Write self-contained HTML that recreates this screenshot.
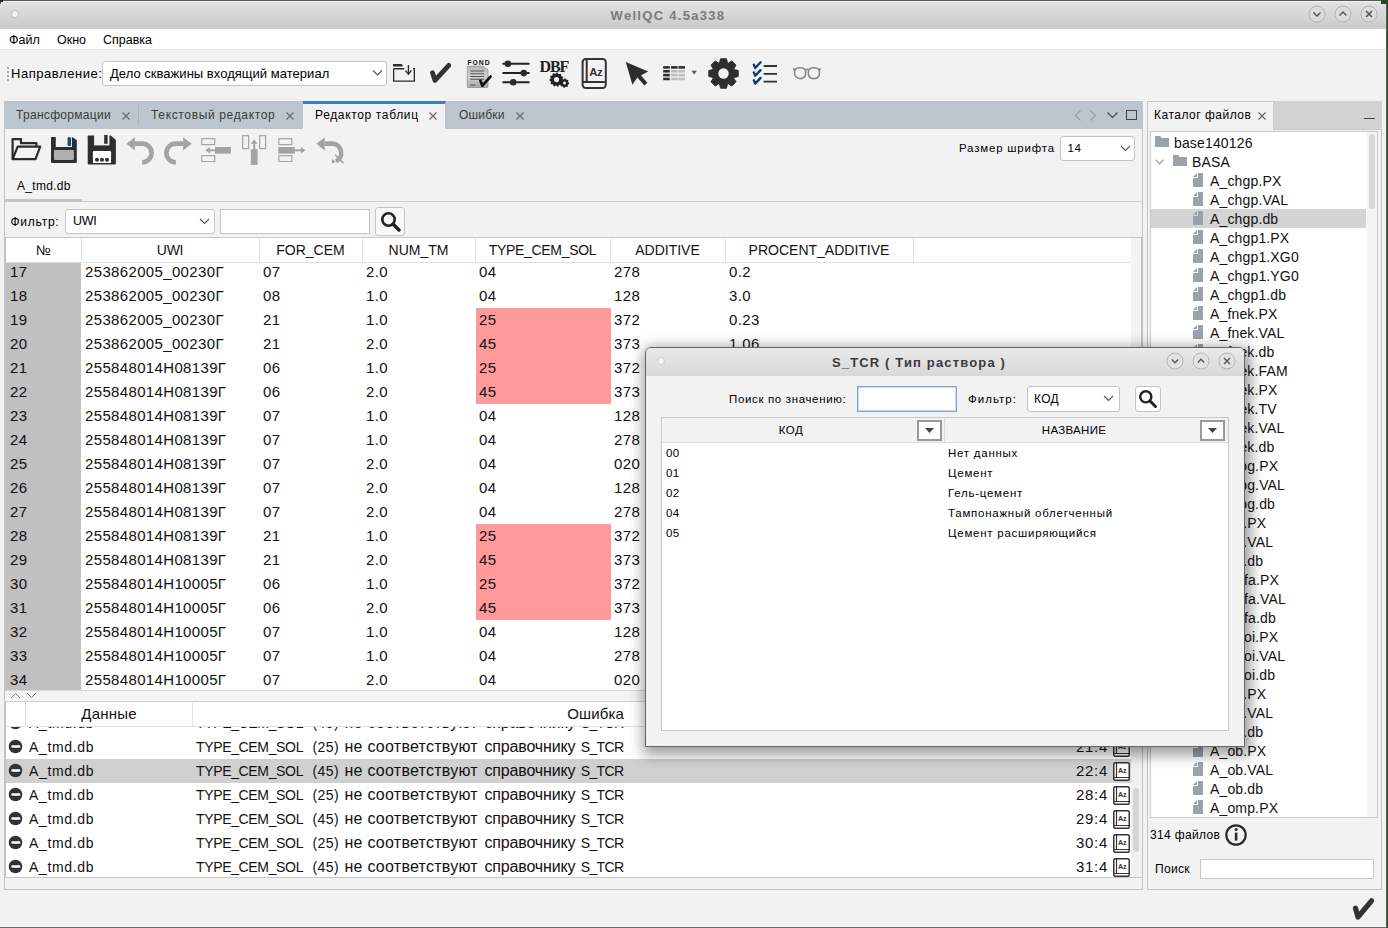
<!DOCTYPE html><html><head><meta charset="utf-8"><style>
html,body{margin:0;padding:0;}body{width:1388px;height:928px;overflow:hidden;position:relative;background:#f2f2f2;font-family:"Liberation Sans",sans-serif;}
div{box-sizing:border-box;}
</style></head><body>
<div style="position:absolute;left:0px;top:0px;width:1388px;height:29px;background:linear-gradient(#e4e4e4,#c9c9c9);"></div>
<div style="position:absolute;left:0px;top:0px;width:1388px;height:1px;background:#5a5a5a;"></div>
<div style="position:absolute;left:0px;top:1px;width:1388px;height:1px;background:#f4f4f4;"></div>
<div style="position:absolute;left:11px;top:10px;width:8px;height:8px;border-radius:50%;background:#f4f4f4;border:1px solid #bdbdbd;"></div>
<div style="position:absolute;left:368px;width:600px;text-align:center;top:7.50px;line-height:16px;font-size:13px;color:#7b7b7b;font-weight:700;letter-spacing:1.3px;white-space:pre;">WellQC 4.5a338</div>
<svg style="position:absolute;left:1308px;top:5px" width="18" height="18" viewBox="0 0 18 18"><circle cx="9" cy="9" r="8" fill="#dcdcdc" stroke="#b4b4b4" stroke-width="1"/><path d="M5.5 7.5 L9 11 L12.5 7.5" fill="none" stroke="#555" stroke-width="1.5"/></svg>
<svg style="position:absolute;left:1334px;top:5px" width="18" height="18" viewBox="0 0 18 18"><circle cx="9" cy="9" r="8" fill="#dcdcdc" stroke="#b4b4b4" stroke-width="1"/><path d="M5.5 10.5 L9 7 L12.5 10.5" fill="none" stroke="#555" stroke-width="1.5"/></svg>
<svg style="position:absolute;left:1360px;top:5px" width="18" height="18" viewBox="0 0 18 18"><circle cx="9" cy="9" r="8" fill="#dcdcdc" stroke="#b4b4b4" stroke-width="1"/><path d="M6 6 L12 12 M12 6 L6 12" fill="none" stroke="#555" stroke-width="1.5"/></svg>
<div style="position:absolute;left:0px;top:29px;width:1388px;height:20px;background:#ffffff;"></div>
<div style="position:absolute;left:0px;top:49px;width:1388px;height:1px;background:#e6e6e6;"></div>
<div style="position:absolute;left:9px;top:32.67px;line-height:15px;font-size:12.5px;color:#000;font-weight:400;letter-spacing:0px;white-space:pre;">Файл</div>
<div style="position:absolute;left:57px;top:32.67px;line-height:15px;font-size:12.5px;color:#000;font-weight:400;letter-spacing:0px;white-space:pre;">Окно</div>
<div style="position:absolute;left:103px;top:32.67px;line-height:15px;font-size:12.5px;color:#000;font-weight:400;letter-spacing:0px;white-space:pre;">Справка</div>
<div style="position:absolute;left:7px;top:66.5px;width:2px;height:2px;background:#a8a8a8;"></div>
<div style="position:absolute;left:7px;top:70.5px;width:2px;height:2px;background:#a8a8a8;"></div>
<div style="position:absolute;left:7px;top:74.5px;width:2px;height:2px;background:#a8a8a8;"></div>
<div style="position:absolute;left:7px;top:78.5px;width:2px;height:2px;background:#a8a8a8;"></div>
<div style="position:absolute;left:11px;top:66.00px;line-height:16px;font-size:13px;color:#000;font-weight:400;letter-spacing:0.55px;white-space:pre;">Направление:</div>
<div style="position:absolute;left:102px;top:61px;width:285px;height:25px;background:#fff;border:1px solid #c4c4c4;border-radius:3px;"></div>
<div style="position:absolute;left:110px;top:66.00px;line-height:16px;font-size:13px;color:#000;font-weight:400;letter-spacing:0.03px;white-space:pre;">Дело скважины входящий материал</div>
<svg style="position:absolute;left:372px;top:69px" width="11" height="8" viewBox="0 0 11 8"><path d="M1 1.5 L5.5 6 L10 1.5" fill="none" stroke="#555" stroke-width="1.1"/></svg>
<svg style="position:absolute;left:392px;top:62px" width="25" height="22" viewBox="0 0 25 22"><path d="M1 2 H9.6 L10.6 3.2 V4.6 H1 Z" fill="#2b2b2b"/><path d="M1.65 6.75 V19.05 H22.35 V6.75 H21 M1.65 6.75 H12.3" fill="none" stroke="#2b2b2b" stroke-width="1.3"/><path d="M16.4 3 V12" stroke="#2b2b2b" stroke-width="1.3"/><path d="M13.5 8.5 L16.4 12.3 L19.3 8.5" fill="none" stroke="#2b2b2b" stroke-width="1.3"/></svg>
<svg style="position:absolute;left:429px;top:61px" width="24" height="24" viewBox="0 0 24 24"><path d="M3.5 11.8 L6 19.4 L19.8 4.3" fill="none" stroke="#333" stroke-width="4.8" stroke-linecap="round" stroke-linejoin="round"/></svg>
<svg style="position:absolute;left:466px;top:59px" width="27" height="29" viewBox="0 0 27 29"><text x="1.4" y="5.9" font-family="Liberation Sans" font-weight="700" font-size="6.8" fill="#111" letter-spacing="1.0">FOND</text><defs><linearGradient id="fg" x1="0" y1="0" x2="0" y2="1"><stop offset="0" stop-color="#b8b8b8"/><stop offset="0.5" stop-color="#d2d2d2"/><stop offset="1" stop-color="#a6a6a6"/></linearGradient></defs><path d="M1.3 8.2 Q1.3 7.3 2.2 7.3 H17 L22 10.8 V27.6 Q22 28.5 21.1 28.5 H2.2 Q1.3 28.5 1.3 27.6 Z" fill="url(#fg)" stroke="#8a8a8a" stroke-width="0.7"/><path d="M4.2 12 H18.2 M4.2 14.7 H18.2 M4.2 17.5 H18.2 M4.2 20.3 H18.2 M4.2 26 H9.5" stroke="#555" stroke-width="1.1"/><path d="M14.4 21.8 L16.4 26.6 L24.5 17.6" fill="none" stroke="#111" stroke-width="2.8" stroke-linecap="round" stroke-linejoin="round"/></svg>
<svg style="position:absolute;left:502px;top:59px" width="28" height="27" viewBox="0 0 28 27"><path d="M1.2 4.8 H26.8 M1.2 14.1 H26.8 M1.2 23.3 H26.8" stroke="#222" stroke-width="2" stroke-linecap="round"/><circle cx="5.9" cy="4.8" r="3.3" fill="#2b2b2b"/><circle cx="21.8" cy="14.1" r="3.3" fill="#2b2b2b"/><circle cx="11.2" cy="23.3" r="3.3" fill="#2b2b2b"/></svg>
<svg style="position:absolute;left:539px;top:58px" width="31" height="30" viewBox="0 0 31 30"><text x="0.6" y="13.6" font-family="Liberation Serif" font-weight="700" font-size="16" fill="#222" letter-spacing="-1.1">DBF</text><path d="M17.50 14.50 L18.51 14.57 L19.19 15.84 L19.99 16.14 L21.34 15.63 L22.15 16.23 L22.03 17.67 L22.55 18.36 L23.96 18.65 L24.31 19.60 L23.44 20.75 L23.50 21.60 L24.53 22.61 L24.31 23.60 L22.96 24.09 L22.55 24.84 L22.87 26.25 L22.15 26.97 L20.74 26.65 L19.99 27.06 L19.50 28.41 L18.51 28.63 L17.50 27.60 L16.65 27.54 L15.50 28.41 L14.55 28.06 L14.26 26.65 L13.57 26.13 L12.13 26.25 L11.53 25.44 L12.04 24.09 L11.74 23.29 L10.47 22.61 L10.40 21.60 L11.56 20.75 L11.74 19.91 L11.04 18.65 L11.53 17.76 L12.97 17.67 L13.57 17.07 L13.66 15.63 L14.55 15.14 L15.81 15.84 L16.65 15.66 Z" fill="#222"/><circle cx="17.5" cy="21.6" r="2.6" fill="#f2f2f2"/><path d="M25.50 20.40 L26.42 20.49 L26.99 21.50 L27.67 21.86 L28.82 21.78 L29.41 22.49 L29.10 23.61 L29.33 24.34 L30.20 25.10 L30.11 26.02 L29.10 26.59 L28.74 27.27 L28.82 28.42 L28.11 29.01 L26.99 28.70 L26.26 28.93 L25.50 29.80 L24.58 29.71 L24.01 28.70 L23.33 28.34 L22.18 28.42 L21.59 27.71 L21.90 26.59 L21.67 25.86 L20.80 25.10 L20.89 24.18 L21.90 23.61 L22.26 22.93 L22.18 21.78 L22.89 21.19 L24.01 21.50 L24.74 21.27 Z" fill="#222"/><circle cx="25.5" cy="25.1" r="1.5" fill="#f2f2f2"/></svg>
<svg style="position:absolute;left:580px;top:57px" width="28" height="32" viewBox="0 0 28 32"><rect x="2.6" y="2" width="23.2" height="29" rx="3.2" fill="none" stroke="#333" stroke-width="2"/><path d="M6.7 2 V25 M2.6 25 H25.8" stroke="#333" stroke-width="2"/><text x="9.2" y="18.6" font-family="Liberation Sans" font-weight="700" font-size="11.4" fill="#333" letter-spacing="-0.3">Az</text></svg>
<svg style="position:absolute;left:625px;top:61px" width="25" height="26" viewBox="0 0 25 26"><path d="M0.8 1.1 L23.2 10.6 L16 14.6 L22.4 21.8 L19.5 24.4 L12.3 16.6 L7.4 23.8 Z" fill="#2e2e2e"/></svg>
<svg style="position:absolute;left:663px;top:66px" width="23" height="15" viewBox="0 0 23 15"><rect x="0.2" y="0.10" width="6.6" height="2.6" fill="#2e2e2e"/><rect x="8.0" y="0.10" width="6.6" height="2.6" fill="#2e2e2e"/><rect x="15.4" y="0.10" width="6.6" height="2.6" fill="#2e2e2e"/><rect x="0.2" y="3.95" width="6.6" height="2.6" fill="#2e2e2e"/><rect x="8.0" y="3.95" width="6.6" height="2.6" fill="#bdbdbd"/><rect x="15.4" y="3.95" width="6.6" height="2.6" fill="#bdbdbd"/><rect x="0.2" y="7.80" width="6.6" height="2.6" fill="#2e2e2e"/><rect x="8.0" y="7.80" width="6.6" height="2.6" fill="#bdbdbd"/><rect x="15.4" y="7.80" width="6.6" height="2.6" fill="#bdbdbd"/><rect x="0.2" y="11.65" width="6.6" height="2.6" fill="#2e2e2e"/><rect x="8.0" y="11.65" width="6.6" height="2.6" fill="#bdbdbd"/><rect x="15.4" y="11.65" width="6.6" height="2.6" fill="#bdbdbd"/></svg>
<svg style="position:absolute;left:691px;top:70px" width="7" height="6" viewBox="0 0 7 6"><path d="M0.6 0.8 H5.8 L3.2 4.6 Z" fill="#555"/></svg>
<svg style="position:absolute;left:708px;top:58px" width="31" height="31" viewBox="0 0 31 31"><path d="M11.55 5.02 L12.52 0.80 L18.48 0.80 L19.45 5.02 L20.12 5.30 L23.79 3.00 L28.00 7.21 L25.70 10.88 L25.98 11.55 L30.20 12.52 L30.20 18.48 L25.98 19.45 L25.70 20.12 L28.00 23.79 L23.79 28.00 L20.12 25.70 L19.45 25.98 L18.48 30.20 L12.52 30.20 L11.55 25.98 L10.88 25.70 L7.21 28.00 L3.00 23.79 L5.30 20.12 L5.02 19.45 L0.80 18.48 L0.80 12.52 L5.02 11.55 L5.30 10.88 L3.00 7.21 L7.21 3.00 L10.88 5.30 Z" fill="#2e2e2e" stroke="#2e2e2e" stroke-width="1" stroke-linejoin="round"/><circle cx="15.5" cy="15.5" r="5.2" fill="#f2f2f2"/></svg>
<svg style="position:absolute;left:752px;top:61px" width="26" height="24" viewBox="0 0 26 24"><path d="M1.8 3.6 L3.2 7 L8.6 1.3 M1.8 11.4 L3.2 14.8 L8.6 9.1 M1.8 19.2 L3.2 22.6 L8.6 16.9" fill="none" stroke="#0d3b73" stroke-width="2.3" stroke-linecap="round" stroke-linejoin="round"/><path d="M11.6 5 H25 M11.6 12.9 H25 M11.6 20.7 H25" stroke="#333" stroke-width="1.8"/></svg>
<svg style="position:absolute;left:792px;top:66px" width="30" height="14" viewBox="0 0 30 14"><path d="M2.5 6.5 C2.5 3 4.5 1.8 8.1 1.8 C11.7 1.8 13.7 3 13.7 6.5 C13.7 10.5 11.3 12.6 8.1 12.6 C4.9 12.6 2.5 10.5 2.5 6.5 Z" fill="none" stroke="#8a8a8a" stroke-width="1.6"/><path d="M16.3 6.5 C16.3 3 18.3 1.8 21.9 1.8 C25.5 1.8 27.5 3 27.5 6.5 C27.5 10.5 25.1 12.6 21.9 12.6 C18.7 12.6 16.3 10.5 16.3 6.5 Z" fill="none" stroke="#8a8a8a" stroke-width="1.6"/><path d="M13.4 3.7 Q15 3.1 16.6 3.7 M1 3.6 L2.8 2.8 M29 3.6 L27.2 2.8" fill="none" stroke="#8a8a8a" stroke-width="1.9"/></svg>
<div style="position:absolute;left:4px;top:101px;width:1139px;height:28px;background:#bdc6cf;border-bottom:1px solid #c2c4c6;"></div>
<div style="position:absolute;left:16px;top:108.34px;line-height:14px;font-size:12px;color:#3b3b3b;font-weight:400;letter-spacing:0.3px;white-space:pre;">Трансформации</div>
<svg style="position:absolute;left:122px;top:112px" width="8" height="8" viewBox="0 0 8 8"><path d="M0.5 0.5 L7.5 7.5 M7.5 0.5 L0.5 7.5" stroke="#6a6a6a" stroke-width="1.2"/></svg>
<div style="position:absolute;left:138px;top:105px;width:1px;height:19px;background:#aab3bd;"></div>
<div style="position:absolute;left:151px;top:108.34px;line-height:14px;font-size:12px;color:#3b3b3b;font-weight:400;letter-spacing:0.65px;white-space:pre;">Текстовый редактор</div>
<svg style="position:absolute;left:286px;top:112px" width="8" height="8" viewBox="0 0 8 8"><path d="M0.5 0.5 L7.5 7.5 M7.5 0.5 L0.5 7.5" stroke="#6a6a6a" stroke-width="1.2"/></svg>
<div style="position:absolute;left:303px;top:101px;width:143px;height:28px;background:#f2f2f2;border-top:3px solid #3b7dc4;border-right:1px solid #c4c4c4;"></div>
<div style="position:absolute;left:315px;top:108.34px;line-height:14px;font-size:12px;color:#000;font-weight:400;letter-spacing:0.65px;white-space:pre;">Редактор таблиц</div>
<svg style="position:absolute;left:429px;top:112px" width="8" height="8" viewBox="0 0 8 8"><path d="M0.5 0.5 L7.5 7.5 M7.5 0.5 L0.5 7.5" stroke="#666" stroke-width="1.2"/></svg>
<div style="position:absolute;left:459px;top:108.34px;line-height:14px;font-size:12px;color:#3b3b3b;font-weight:400;letter-spacing:0.2px;white-space:pre;">Ошибки</div>
<svg style="position:absolute;left:516px;top:112px" width="8" height="8" viewBox="0 0 8 8"><path d="M0.5 0.5 L7.5 7.5 M7.5 0.5 L0.5 7.5" stroke="#6a6a6a" stroke-width="1.2"/></svg>
<svg style="position:absolute;left:1074px;top:110px" width="8" height="11" viewBox="0 0 8 11"><path d="M6.5 0.5 L1.5 5.5 L6.5 10.5" fill="none" stroke="#98a0a8" stroke-width="1.1"/></svg>
<svg style="position:absolute;left:1089px;top:110px" width="8" height="11" viewBox="0 0 8 11"><path d="M1.5 0.5 L6.5 5.5 L1.5 10.5" fill="none" stroke="#98a0a8" stroke-width="1.1"/></svg>
<svg style="position:absolute;left:1107px;top:112px" width="11" height="7" viewBox="0 0 11 7"><path d="M0.5 0.5 L5.5 5.5 L10.5 0.5" fill="none" stroke="#444" stroke-width="1.2"/></svg>
<div style="position:absolute;left:1126px;top:110px;width:11px;height:10px;border:1.5px solid #444;"></div>
<div style="position:absolute;left:4px;top:128px;width:1139px;height:762px;border-left:1px solid #c2c2c2;border-right:1px solid #c2c2c2;border-bottom:1px solid #c2c2c2;"></div>
<svg style="position:absolute;left:11px;top:137px" width="32" height="25" viewBox="0 0 32 25"><path d="M1.6 22.2 V2.2 H10 V6.2 H25.4 V9.5" fill="none" stroke="#2b2b2b" stroke-width="2.2" stroke-linejoin="round"/><path d="M1.6 22.2 L6.7 9.6 H29.2 L24.5 22.2 Z" fill="none" stroke="#2b2b2b" stroke-width="2.2" stroke-linejoin="round"/></svg>
<svg style="position:absolute;left:51px;top:137px" width="26" height="26" viewBox="0 0 26 26"><path d="M0.8 0 H21 L25.8 3 V25.2 Q25.8 25.9 25 25.9 H0.8 Q0 25.9 0 25.1 V0.8 Q0 0 0.8 0 Z" fill="#2e2e2e"/><rect x="4.8" y="-1" width="16.1" height="11" fill="#f2f2f2"/><rect x="16.6" y="0.2" width="3.4" height="8.7" rx="0.8" fill="#0f4a85"/><rect x="3" y="12.9" width="19.9" height="10.1" rx="1" fill="#b0b0b0"/></svg>
<svg style="position:absolute;left:87px;top:135px" width="30" height="30" viewBox="0 0 30 30"><path d="M1.5 0.5 H23.8 L28.9 5 V28.6 Q28.9 29.4 28.1 29.4 H1.5 Q0.7 29.4 0.7 28.6 V1.3 Q0.7 0.5 1.5 0.5 Z" fill="#2e2e2e"/><rect x="7.1" y="-1" width="15.3" height="11.4" fill="#f2f2f2"/><rect x="17.2" y="0" width="3.4" height="8.8" fill="#2e2e2e"/><rect x="5.9" y="16" width="18.2" height="12.1" rx="1.2" fill="#fff"/><circle cx="10" cy="24.7" r="2" fill="#2e2e2e"/><circle cx="15" cy="24.7" r="2" fill="#2e2e2e"/><circle cx="20" cy="24.7" r="2" fill="#2e2e2e"/></svg>
<svg style="position:absolute;left:126px;top:137px" width="28" height="28" viewBox="0 0 28 28"><path d="M8.7 6.6 H16.2 A9.4 9.4 0 0 1 16.2 25.4" fill="none" stroke="#a3a3a3" stroke-width="4.6"/><path d="M0.4 6.8 L8.9 0.2 V13.5 Z" fill="#a3a3a3"/></svg>
<svg style="position:absolute;left:164px;top:137px" width="28" height="28" viewBox="0 0 28 28"><g transform="translate(28,0) scale(-1,1)"><path d="M8.7 6.6 H16.2 A9.4 9.4 0 0 1 16.2 25.4" fill="none" stroke="#a3a3a3" stroke-width="4.6"/><path d="M0.4 6.8 L8.9 0.2 V13.5 Z" fill="#a3a3a3"/></g></svg>
<svg style="position:absolute;left:201px;top:138px" width="31" height="24" viewBox="0 0 31 24"><rect x="0.8" y="0.7" width="12.9" height="5.9" fill="none" stroke="#a3a3a3" stroke-width="1.2"/><rect x="0.8" y="17.7" width="12.9" height="5.9" fill="none" stroke="#a3a3a3" stroke-width="1.2"/><rect x="14" y="9" width="15.9" height="6.6" fill="#a3a3a3"/><path d="M7 12.3 H15" stroke="#a3a3a3" stroke-width="2"/><path d="M4.2 12.3 L8.8 9 V15.6 Z" fill="#a3a3a3"/></svg>
<svg style="position:absolute;left:242px;top:135px" width="25" height="31" viewBox="0 0 25 31"><rect x="0.7" y="0.7" width="5.9" height="12.9" fill="none" stroke="#a3a3a3" stroke-width="1.2"/><rect x="17.7" y="0.7" width="5.9" height="12.9" fill="none" stroke="#a3a3a3" stroke-width="1.2"/><rect x="8.8" y="14.3" width="6.8" height="15.6" fill="#a3a3a3"/><path d="M12.2 7 V15" stroke="#a3a3a3" stroke-width="2"/><path d="M12.2 4.2 L9 8.8 H15.4 Z" fill="#a3a3a3"/></svg>
<svg style="position:absolute;left:278px;top:138px" width="28" height="24" viewBox="0 0 28 24"><rect x="0.9" y="0.7" width="12.9" height="5.9" fill="none" stroke="#a3a3a3" stroke-width="1.2"/><rect x="0.9" y="17.7" width="12.9" height="5.9" fill="none" stroke="#a3a3a3" stroke-width="1.2"/><rect x="0.3" y="9" width="16.5" height="6.6" fill="#a3a3a3"/><path d="M16 12.3 H24" stroke="#a3a3a3" stroke-width="2"/><path d="M27.4 12.3 L23 9 V15.6 Z" fill="#a3a3a3"/></svg>
<svg style="position:absolute;left:316px;top:137px" width="29" height="28" viewBox="0 0 29 28"><path d="M8.7 6.6 H17 A9.3 9.3 0 0 1 20 24.2" fill="none" stroke="#a3a3a3" stroke-width="4.6"/><path d="M0.4 6.8 L8.7 0.2 V13.5 Z" fill="#a3a3a3"/><path d="M15.8 22 L16 26.5 L20 24.8" fill="#a3a3a3"/><path d="M19 17.8 L27.5 26.1" stroke="#a3a3a3" stroke-width="1.6"/></svg>
<div style="position:absolute;left:959px;top:141.02px;line-height:14px;font-size:11.5px;color:#000;font-weight:400;letter-spacing:0.8px;white-space:pre;">Размер шрифта</div>
<div style="position:absolute;left:1060px;top:136px;width:75px;height:25px;background:#fff;border:1px solid #c4c4c4;border-radius:3px;"></div>
<div style="position:absolute;left:1067.5px;top:141.02px;line-height:14px;font-size:11.5px;color:#000;font-weight:400;letter-spacing:0.6px;white-space:pre;">14</div>
<svg style="position:absolute;left:1120px;top:145px" width="11" height="7" viewBox="0 0 11 7"><path d="M1 1 L5.5 5.5 L10 1" fill="none" stroke="#555" stroke-width="1.1"/></svg>
<div style="position:absolute;left:17px;top:179.34px;line-height:14px;font-size:12px;color:#000;font-weight:400;letter-spacing:0.3px;white-space:pre;">A_tmd.db</div>
<div style="position:absolute;left:5px;top:201px;width:1137px;height:1px;background:#cfcfcf;"></div>
<div style="position:absolute;left:5px;top:199px;width:77px;height:3px;background:#c4c4c4;"></div>
<div style="position:absolute;left:10.5px;top:215.34px;line-height:14px;font-size:12px;color:#000;font-weight:400;letter-spacing:0.75px;white-space:pre;">Фильтр:</div>
<div style="position:absolute;left:65px;top:209px;width:150px;height:25px;background:#fff;border:1px solid #c4c4c4;border-radius:3px;"></div>
<div style="position:absolute;left:73px;top:214.17px;line-height:15px;font-size:12.5px;color:#000;font-weight:400;letter-spacing:-0.3px;white-space:pre;">UWI</div>
<svg style="position:absolute;left:199px;top:218px" width="11" height="7" viewBox="0 0 11 7"><path d="M1 1 L5.5 5.5 L10 1" fill="none" stroke="#555" stroke-width="1.1"/></svg>
<div style="position:absolute;left:220px;top:209px;width:150px;height:25px;background:#fff;border:1px solid #c4c4c4;"></div>
<div style="position:absolute;left:375px;top:207px;width:30px;height:29px;background:#f8f8f8;border:1px solid #c4c4c4;border-radius:3px;"></div>
<svg style="position:absolute;left:380px;top:211px" width="21" height="21" viewBox="0 0 21 21"><circle cx="8.5" cy="8.5" r="6.2" fill="none" stroke="#222" stroke-width="2.6"/><path d="M13 13 L19 19" stroke="#222" stroke-width="3.4" stroke-linecap="round"/></svg>
<div style="position:absolute;left:5px;top:237px;width:1137px;height:1px;background:#c8c8c8;"></div>
<div style="position:absolute;left:5px;top:237px;width:1px;height:453px;background:#c4c4c4;"></div>
<div style="position:absolute;left:6px;top:263px;width:1125px;height:427px;overflow:hidden;background:#fff;">
<div style="position:absolute;left:0;top:0;width:75px;height:428px;background:#c0c0c0;"></div>
<div style="position:absolute;left:4px;top:-3px;height:24px;line-height:24px;font-size:15px;letter-spacing:0.35px;white-space:pre;color:#111;">17</div><div style="position:absolute;left:79px;top:-3px;height:24px;line-height:24px;font-size:15px;letter-spacing:0.35px;white-space:pre;color:#111;">253862005_00230Г</div><div style="position:absolute;left:257px;top:-3px;height:24px;line-height:24px;font-size:15px;letter-spacing:0.35px;white-space:pre;color:#111;">07</div><div style="position:absolute;left:360px;top:-3px;height:24px;line-height:24px;font-size:15px;letter-spacing:0.35px;white-space:pre;color:#111;">2.0</div><div style="position:absolute;left:473px;top:-3px;height:24px;line-height:24px;font-size:15px;letter-spacing:0.35px;white-space:pre;color:#111;">04</div><div style="position:absolute;left:608px;top:-3px;height:24px;line-height:24px;font-size:15px;letter-spacing:0.35px;white-space:pre;color:#111;">278</div><div style="position:absolute;left:723px;top:-3px;height:24px;line-height:24px;font-size:15px;letter-spacing:0.35px;white-space:pre;color:#111;">0.2</div><div style="position:absolute;left:4px;top:21px;height:24px;line-height:24px;font-size:15px;letter-spacing:0.35px;white-space:pre;color:#111;">18</div><div style="position:absolute;left:79px;top:21px;height:24px;line-height:24px;font-size:15px;letter-spacing:0.35px;white-space:pre;color:#111;">253862005_00230Г</div><div style="position:absolute;left:257px;top:21px;height:24px;line-height:24px;font-size:15px;letter-spacing:0.35px;white-space:pre;color:#111;">08</div><div style="position:absolute;left:360px;top:21px;height:24px;line-height:24px;font-size:15px;letter-spacing:0.35px;white-space:pre;color:#111;">1.0</div><div style="position:absolute;left:473px;top:21px;height:24px;line-height:24px;font-size:15px;letter-spacing:0.35px;white-space:pre;color:#111;">04</div><div style="position:absolute;left:608px;top:21px;height:24px;line-height:24px;font-size:15px;letter-spacing:0.35px;white-space:pre;color:#111;">128</div><div style="position:absolute;left:723px;top:21px;height:24px;line-height:24px;font-size:15px;letter-spacing:0.35px;white-space:pre;color:#111;">3.0</div><div style="position:absolute;left:470px;top:45px;width:135px;height:24px;background:#ff9a9a;"></div><div style="position:absolute;left:4px;top:45px;height:24px;line-height:24px;font-size:15px;letter-spacing:0.35px;white-space:pre;color:#111;">19</div><div style="position:absolute;left:79px;top:45px;height:24px;line-height:24px;font-size:15px;letter-spacing:0.35px;white-space:pre;color:#111;">253862005_00230Г</div><div style="position:absolute;left:257px;top:45px;height:24px;line-height:24px;font-size:15px;letter-spacing:0.35px;white-space:pre;color:#111;">21</div><div style="position:absolute;left:360px;top:45px;height:24px;line-height:24px;font-size:15px;letter-spacing:0.35px;white-space:pre;color:#111;">1.0</div><div style="position:absolute;left:473px;top:45px;height:24px;line-height:24px;font-size:15px;letter-spacing:0.35px;white-space:pre;color:#111;">25</div><div style="position:absolute;left:608px;top:45px;height:24px;line-height:24px;font-size:15px;letter-spacing:0.35px;white-space:pre;color:#111;">372</div><div style="position:absolute;left:723px;top:45px;height:24px;line-height:24px;font-size:15px;letter-spacing:0.35px;white-space:pre;color:#111;">0.23</div><div style="position:absolute;left:470px;top:69px;width:135px;height:24px;background:#ff9a9a;"></div><div style="position:absolute;left:4px;top:69px;height:24px;line-height:24px;font-size:15px;letter-spacing:0.35px;white-space:pre;color:#111;">20</div><div style="position:absolute;left:79px;top:69px;height:24px;line-height:24px;font-size:15px;letter-spacing:0.35px;white-space:pre;color:#111;">253862005_00230Г</div><div style="position:absolute;left:257px;top:69px;height:24px;line-height:24px;font-size:15px;letter-spacing:0.35px;white-space:pre;color:#111;">21</div><div style="position:absolute;left:360px;top:69px;height:24px;line-height:24px;font-size:15px;letter-spacing:0.35px;white-space:pre;color:#111;">2.0</div><div style="position:absolute;left:473px;top:69px;height:24px;line-height:24px;font-size:15px;letter-spacing:0.35px;white-space:pre;color:#111;">45</div><div style="position:absolute;left:608px;top:69px;height:24px;line-height:24px;font-size:15px;letter-spacing:0.35px;white-space:pre;color:#111;">373</div><div style="position:absolute;left:723px;top:69px;height:24px;line-height:24px;font-size:15px;letter-spacing:0.35px;white-space:pre;color:#111;">1.06</div><div style="position:absolute;left:470px;top:93px;width:135px;height:24px;background:#ff9a9a;"></div><div style="position:absolute;left:4px;top:93px;height:24px;line-height:24px;font-size:15px;letter-spacing:0.35px;white-space:pre;color:#111;">21</div><div style="position:absolute;left:79px;top:93px;height:24px;line-height:24px;font-size:15px;letter-spacing:0.35px;white-space:pre;color:#111;">255848014H08139Г</div><div style="position:absolute;left:257px;top:93px;height:24px;line-height:24px;font-size:15px;letter-spacing:0.35px;white-space:pre;color:#111;">06</div><div style="position:absolute;left:360px;top:93px;height:24px;line-height:24px;font-size:15px;letter-spacing:0.35px;white-space:pre;color:#111;">1.0</div><div style="position:absolute;left:473px;top:93px;height:24px;line-height:24px;font-size:15px;letter-spacing:0.35px;white-space:pre;color:#111;">25</div><div style="position:absolute;left:608px;top:93px;height:24px;line-height:24px;font-size:15px;letter-spacing:0.35px;white-space:pre;color:#111;">372</div><div style="position:absolute;left:723px;top:93px;height:24px;line-height:24px;font-size:15px;letter-spacing:0.35px;white-space:pre;color:#111;">0.23</div><div style="position:absolute;left:470px;top:117px;width:135px;height:24px;background:#ff9a9a;"></div><div style="position:absolute;left:4px;top:117px;height:24px;line-height:24px;font-size:15px;letter-spacing:0.35px;white-space:pre;color:#111;">22</div><div style="position:absolute;left:79px;top:117px;height:24px;line-height:24px;font-size:15px;letter-spacing:0.35px;white-space:pre;color:#111;">255848014H08139Г</div><div style="position:absolute;left:257px;top:117px;height:24px;line-height:24px;font-size:15px;letter-spacing:0.35px;white-space:pre;color:#111;">06</div><div style="position:absolute;left:360px;top:117px;height:24px;line-height:24px;font-size:15px;letter-spacing:0.35px;white-space:pre;color:#111;">2.0</div><div style="position:absolute;left:473px;top:117px;height:24px;line-height:24px;font-size:15px;letter-spacing:0.35px;white-space:pre;color:#111;">45</div><div style="position:absolute;left:608px;top:117px;height:24px;line-height:24px;font-size:15px;letter-spacing:0.35px;white-space:pre;color:#111;">373</div><div style="position:absolute;left:723px;top:117px;height:24px;line-height:24px;font-size:15px;letter-spacing:0.35px;white-space:pre;color:#111;">1.06</div><div style="position:absolute;left:4px;top:141px;height:24px;line-height:24px;font-size:15px;letter-spacing:0.35px;white-space:pre;color:#111;">23</div><div style="position:absolute;left:79px;top:141px;height:24px;line-height:24px;font-size:15px;letter-spacing:0.35px;white-space:pre;color:#111;">255848014H08139Г</div><div style="position:absolute;left:257px;top:141px;height:24px;line-height:24px;font-size:15px;letter-spacing:0.35px;white-space:pre;color:#111;">07</div><div style="position:absolute;left:360px;top:141px;height:24px;line-height:24px;font-size:15px;letter-spacing:0.35px;white-space:pre;color:#111;">1.0</div><div style="position:absolute;left:473px;top:141px;height:24px;line-height:24px;font-size:15px;letter-spacing:0.35px;white-space:pre;color:#111;">04</div><div style="position:absolute;left:608px;top:141px;height:24px;line-height:24px;font-size:15px;letter-spacing:0.35px;white-space:pre;color:#111;">128</div><div style="position:absolute;left:723px;top:141px;height:24px;line-height:24px;font-size:15px;letter-spacing:0.35px;white-space:pre;color:#111;">3.0</div><div style="position:absolute;left:4px;top:165px;height:24px;line-height:24px;font-size:15px;letter-spacing:0.35px;white-space:pre;color:#111;">24</div><div style="position:absolute;left:79px;top:165px;height:24px;line-height:24px;font-size:15px;letter-spacing:0.35px;white-space:pre;color:#111;">255848014H08139Г</div><div style="position:absolute;left:257px;top:165px;height:24px;line-height:24px;font-size:15px;letter-spacing:0.35px;white-space:pre;color:#111;">07</div><div style="position:absolute;left:360px;top:165px;height:24px;line-height:24px;font-size:15px;letter-spacing:0.35px;white-space:pre;color:#111;">1.0</div><div style="position:absolute;left:473px;top:165px;height:24px;line-height:24px;font-size:15px;letter-spacing:0.35px;white-space:pre;color:#111;">04</div><div style="position:absolute;left:608px;top:165px;height:24px;line-height:24px;font-size:15px;letter-spacing:0.35px;white-space:pre;color:#111;">278</div><div style="position:absolute;left:723px;top:165px;height:24px;line-height:24px;font-size:15px;letter-spacing:0.35px;white-space:pre;color:#111;">0.2</div><div style="position:absolute;left:4px;top:189px;height:24px;line-height:24px;font-size:15px;letter-spacing:0.35px;white-space:pre;color:#111;">25</div><div style="position:absolute;left:79px;top:189px;height:24px;line-height:24px;font-size:15px;letter-spacing:0.35px;white-space:pre;color:#111;">255848014H08139Г</div><div style="position:absolute;left:257px;top:189px;height:24px;line-height:24px;font-size:15px;letter-spacing:0.35px;white-space:pre;color:#111;">07</div><div style="position:absolute;left:360px;top:189px;height:24px;line-height:24px;font-size:15px;letter-spacing:0.35px;white-space:pre;color:#111;">2.0</div><div style="position:absolute;left:473px;top:189px;height:24px;line-height:24px;font-size:15px;letter-spacing:0.35px;white-space:pre;color:#111;">04</div><div style="position:absolute;left:608px;top:189px;height:24px;line-height:24px;font-size:15px;letter-spacing:0.35px;white-space:pre;color:#111;">020</div><div style="position:absolute;left:723px;top:189px;height:24px;line-height:24px;font-size:15px;letter-spacing:0.35px;white-space:pre;color:#111;">0.5</div><div style="position:absolute;left:4px;top:213px;height:24px;line-height:24px;font-size:15px;letter-spacing:0.35px;white-space:pre;color:#111;">26</div><div style="position:absolute;left:79px;top:213px;height:24px;line-height:24px;font-size:15px;letter-spacing:0.35px;white-space:pre;color:#111;">255848014H08139Г</div><div style="position:absolute;left:257px;top:213px;height:24px;line-height:24px;font-size:15px;letter-spacing:0.35px;white-space:pre;color:#111;">07</div><div style="position:absolute;left:360px;top:213px;height:24px;line-height:24px;font-size:15px;letter-spacing:0.35px;white-space:pre;color:#111;">2.0</div><div style="position:absolute;left:473px;top:213px;height:24px;line-height:24px;font-size:15px;letter-spacing:0.35px;white-space:pre;color:#111;">04</div><div style="position:absolute;left:608px;top:213px;height:24px;line-height:24px;font-size:15px;letter-spacing:0.35px;white-space:pre;color:#111;">128</div><div style="position:absolute;left:723px;top:213px;height:24px;line-height:24px;font-size:15px;letter-spacing:0.35px;white-space:pre;color:#111;">3.0</div><div style="position:absolute;left:4px;top:237px;height:24px;line-height:24px;font-size:15px;letter-spacing:0.35px;white-space:pre;color:#111;">27</div><div style="position:absolute;left:79px;top:237px;height:24px;line-height:24px;font-size:15px;letter-spacing:0.35px;white-space:pre;color:#111;">255848014H08139Г</div><div style="position:absolute;left:257px;top:237px;height:24px;line-height:24px;font-size:15px;letter-spacing:0.35px;white-space:pre;color:#111;">07</div><div style="position:absolute;left:360px;top:237px;height:24px;line-height:24px;font-size:15px;letter-spacing:0.35px;white-space:pre;color:#111;">2.0</div><div style="position:absolute;left:473px;top:237px;height:24px;line-height:24px;font-size:15px;letter-spacing:0.35px;white-space:pre;color:#111;">04</div><div style="position:absolute;left:608px;top:237px;height:24px;line-height:24px;font-size:15px;letter-spacing:0.35px;white-space:pre;color:#111;">278</div><div style="position:absolute;left:723px;top:237px;height:24px;line-height:24px;font-size:15px;letter-spacing:0.35px;white-space:pre;color:#111;">0.2</div><div style="position:absolute;left:470px;top:261px;width:135px;height:24px;background:#ff9a9a;"></div><div style="position:absolute;left:4px;top:261px;height:24px;line-height:24px;font-size:15px;letter-spacing:0.35px;white-space:pre;color:#111;">28</div><div style="position:absolute;left:79px;top:261px;height:24px;line-height:24px;font-size:15px;letter-spacing:0.35px;white-space:pre;color:#111;">255848014H08139Г</div><div style="position:absolute;left:257px;top:261px;height:24px;line-height:24px;font-size:15px;letter-spacing:0.35px;white-space:pre;color:#111;">21</div><div style="position:absolute;left:360px;top:261px;height:24px;line-height:24px;font-size:15px;letter-spacing:0.35px;white-space:pre;color:#111;">1.0</div><div style="position:absolute;left:473px;top:261px;height:24px;line-height:24px;font-size:15px;letter-spacing:0.35px;white-space:pre;color:#111;">25</div><div style="position:absolute;left:608px;top:261px;height:24px;line-height:24px;font-size:15px;letter-spacing:0.35px;white-space:pre;color:#111;">372</div><div style="position:absolute;left:723px;top:261px;height:24px;line-height:24px;font-size:15px;letter-spacing:0.35px;white-space:pre;color:#111;">0.23</div><div style="position:absolute;left:470px;top:285px;width:135px;height:24px;background:#ff9a9a;"></div><div style="position:absolute;left:4px;top:285px;height:24px;line-height:24px;font-size:15px;letter-spacing:0.35px;white-space:pre;color:#111;">29</div><div style="position:absolute;left:79px;top:285px;height:24px;line-height:24px;font-size:15px;letter-spacing:0.35px;white-space:pre;color:#111;">255848014H08139Г</div><div style="position:absolute;left:257px;top:285px;height:24px;line-height:24px;font-size:15px;letter-spacing:0.35px;white-space:pre;color:#111;">21</div><div style="position:absolute;left:360px;top:285px;height:24px;line-height:24px;font-size:15px;letter-spacing:0.35px;white-space:pre;color:#111;">2.0</div><div style="position:absolute;left:473px;top:285px;height:24px;line-height:24px;font-size:15px;letter-spacing:0.35px;white-space:pre;color:#111;">45</div><div style="position:absolute;left:608px;top:285px;height:24px;line-height:24px;font-size:15px;letter-spacing:0.35px;white-space:pre;color:#111;">373</div><div style="position:absolute;left:723px;top:285px;height:24px;line-height:24px;font-size:15px;letter-spacing:0.35px;white-space:pre;color:#111;">1.06</div><div style="position:absolute;left:470px;top:309px;width:135px;height:24px;background:#ff9a9a;"></div><div style="position:absolute;left:4px;top:309px;height:24px;line-height:24px;font-size:15px;letter-spacing:0.35px;white-space:pre;color:#111;">30</div><div style="position:absolute;left:79px;top:309px;height:24px;line-height:24px;font-size:15px;letter-spacing:0.35px;white-space:pre;color:#111;">255848014H10005Г</div><div style="position:absolute;left:257px;top:309px;height:24px;line-height:24px;font-size:15px;letter-spacing:0.35px;white-space:pre;color:#111;">06</div><div style="position:absolute;left:360px;top:309px;height:24px;line-height:24px;font-size:15px;letter-spacing:0.35px;white-space:pre;color:#111;">1.0</div><div style="position:absolute;left:473px;top:309px;height:24px;line-height:24px;font-size:15px;letter-spacing:0.35px;white-space:pre;color:#111;">25</div><div style="position:absolute;left:608px;top:309px;height:24px;line-height:24px;font-size:15px;letter-spacing:0.35px;white-space:pre;color:#111;">372</div><div style="position:absolute;left:723px;top:309px;height:24px;line-height:24px;font-size:15px;letter-spacing:0.35px;white-space:pre;color:#111;">0.23</div><div style="position:absolute;left:470px;top:333px;width:135px;height:24px;background:#ff9a9a;"></div><div style="position:absolute;left:4px;top:333px;height:24px;line-height:24px;font-size:15px;letter-spacing:0.35px;white-space:pre;color:#111;">31</div><div style="position:absolute;left:79px;top:333px;height:24px;line-height:24px;font-size:15px;letter-spacing:0.35px;white-space:pre;color:#111;">255848014H10005Г</div><div style="position:absolute;left:257px;top:333px;height:24px;line-height:24px;font-size:15px;letter-spacing:0.35px;white-space:pre;color:#111;">06</div><div style="position:absolute;left:360px;top:333px;height:24px;line-height:24px;font-size:15px;letter-spacing:0.35px;white-space:pre;color:#111;">2.0</div><div style="position:absolute;left:473px;top:333px;height:24px;line-height:24px;font-size:15px;letter-spacing:0.35px;white-space:pre;color:#111;">45</div><div style="position:absolute;left:608px;top:333px;height:24px;line-height:24px;font-size:15px;letter-spacing:0.35px;white-space:pre;color:#111;">373</div><div style="position:absolute;left:723px;top:333px;height:24px;line-height:24px;font-size:15px;letter-spacing:0.35px;white-space:pre;color:#111;">1.06</div><div style="position:absolute;left:4px;top:357px;height:24px;line-height:24px;font-size:15px;letter-spacing:0.35px;white-space:pre;color:#111;">32</div><div style="position:absolute;left:79px;top:357px;height:24px;line-height:24px;font-size:15px;letter-spacing:0.35px;white-space:pre;color:#111;">255848014H10005Г</div><div style="position:absolute;left:257px;top:357px;height:24px;line-height:24px;font-size:15px;letter-spacing:0.35px;white-space:pre;color:#111;">07</div><div style="position:absolute;left:360px;top:357px;height:24px;line-height:24px;font-size:15px;letter-spacing:0.35px;white-space:pre;color:#111;">1.0</div><div style="position:absolute;left:473px;top:357px;height:24px;line-height:24px;font-size:15px;letter-spacing:0.35px;white-space:pre;color:#111;">04</div><div style="position:absolute;left:608px;top:357px;height:24px;line-height:24px;font-size:15px;letter-spacing:0.35px;white-space:pre;color:#111;">128</div><div style="position:absolute;left:723px;top:357px;height:24px;line-height:24px;font-size:15px;letter-spacing:0.35px;white-space:pre;color:#111;">3.0</div><div style="position:absolute;left:4px;top:381px;height:24px;line-height:24px;font-size:15px;letter-spacing:0.35px;white-space:pre;color:#111;">33</div><div style="position:absolute;left:79px;top:381px;height:24px;line-height:24px;font-size:15px;letter-spacing:0.35px;white-space:pre;color:#111;">255848014H10005Г</div><div style="position:absolute;left:257px;top:381px;height:24px;line-height:24px;font-size:15px;letter-spacing:0.35px;white-space:pre;color:#111;">07</div><div style="position:absolute;left:360px;top:381px;height:24px;line-height:24px;font-size:15px;letter-spacing:0.35px;white-space:pre;color:#111;">1.0</div><div style="position:absolute;left:473px;top:381px;height:24px;line-height:24px;font-size:15px;letter-spacing:0.35px;white-space:pre;color:#111;">04</div><div style="position:absolute;left:608px;top:381px;height:24px;line-height:24px;font-size:15px;letter-spacing:0.35px;white-space:pre;color:#111;">278</div><div style="position:absolute;left:723px;top:381px;height:24px;line-height:24px;font-size:15px;letter-spacing:0.35px;white-space:pre;color:#111;">0.2</div><div style="position:absolute;left:4px;top:405px;height:24px;line-height:24px;font-size:15px;letter-spacing:0.35px;white-space:pre;color:#111;">34</div><div style="position:absolute;left:79px;top:405px;height:24px;line-height:24px;font-size:15px;letter-spacing:0.35px;white-space:pre;color:#111;">255848014H10005Г</div><div style="position:absolute;left:257px;top:405px;height:24px;line-height:24px;font-size:15px;letter-spacing:0.35px;white-space:pre;color:#111;">07</div><div style="position:absolute;left:360px;top:405px;height:24px;line-height:24px;font-size:15px;letter-spacing:0.35px;white-space:pre;color:#111;">2.0</div><div style="position:absolute;left:473px;top:405px;height:24px;line-height:24px;font-size:15px;letter-spacing:0.35px;white-space:pre;color:#111;">04</div><div style="position:absolute;left:608px;top:405px;height:24px;line-height:24px;font-size:15px;letter-spacing:0.35px;white-space:pre;color:#111;">020</div><div style="position:absolute;left:723px;top:405px;height:24px;line-height:24px;font-size:15px;letter-spacing:0.35px;white-space:pre;color:#111;">0.5</div>
</div>
<div style="position:absolute;left:6px;top:238px;width:1125px;height:25px;background:#fff;border-bottom:1px solid #e0e0e0;"></div>
<div style="position:absolute;left:-256.5px;width:600px;text-align:center;top:241.65px;line-height:17px;font-size:14px;color:#111;font-weight:400;letter-spacing:0px;white-space:pre;">№</div>
<div style="position:absolute;left:81px;top:238px;width:1px;height:25px;background:#e3e3e3;"></div>
<div style="position:absolute;left:-130.0px;width:600px;text-align:center;top:241.65px;line-height:17px;font-size:14px;color:#111;font-weight:400;letter-spacing:-0.3px;white-space:pre;">UWI</div>
<div style="position:absolute;left:259px;top:238px;width:1px;height:25px;background:#e3e3e3;"></div>
<div style="position:absolute;left:10.5px;width:600px;text-align:center;top:241.65px;line-height:17px;font-size:14px;color:#111;font-weight:400;letter-spacing:0px;white-space:pre;">FOR_CEM</div>
<div style="position:absolute;left:362px;top:238px;width:1px;height:25px;background:#e3e3e3;"></div>
<div style="position:absolute;left:118.5px;width:600px;text-align:center;top:241.65px;line-height:17px;font-size:14px;color:#111;font-weight:400;letter-spacing:0px;white-space:pre;">NUM_TM</div>
<div style="position:absolute;left:475px;top:238px;width:1px;height:25px;background:#e3e3e3;"></div>
<div style="position:absolute;left:242.5px;width:600px;text-align:center;top:241.65px;line-height:17px;font-size:14px;color:#111;font-weight:400;letter-spacing:-0.3px;white-space:pre;">TYPE_CEM_SOL</div>
<div style="position:absolute;left:610px;top:238px;width:1px;height:25px;background:#e3e3e3;"></div>
<div style="position:absolute;left:367.5px;width:600px;text-align:center;top:241.65px;line-height:17px;font-size:14px;color:#111;font-weight:400;letter-spacing:0px;white-space:pre;">ADDITIVE</div>
<div style="position:absolute;left:725px;top:238px;width:1px;height:25px;background:#e3e3e3;"></div>
<div style="position:absolute;left:519.0px;width:600px;text-align:center;top:241.65px;line-height:17px;font-size:14px;color:#111;font-weight:400;letter-spacing:0px;white-space:pre;">PROCENT_ADDITIVE</div>
<div style="position:absolute;left:913px;top:238px;width:1px;height:25px;background:#e3e3e3;"></div>
<div style="position:absolute;left:1131px;top:238px;width:10px;height:452px;background:#f4f4f4;"></div>
<div style="position:absolute;left:1141px;top:237px;width:1px;height:453px;background:#bdbdbd;"></div>
<div style="position:absolute;left:5px;top:690px;width:1137px;height:12px;background:#f4f4f4;border-top:1px solid #d6d6d6;border-bottom:1px solid #d0d0d0;"></div>
<svg style="position:absolute;left:10px;top:692px" width="11" height="7" viewBox="0 0 11 7"><path d="M1 6 L5.5 1.5 L10 6" fill="none" stroke="#777" stroke-width="1"/></svg>
<svg style="position:absolute;left:26px;top:692px" width="11" height="7" viewBox="0 0 11 7"><path d="M1 1 L5.5 5.5 L10 1" fill="none" stroke="#777" stroke-width="1"/></svg>
<div style="position:absolute;left:6px;top:727px;width:1125px;height:150px;overflow:hidden;background:#fff;">
<svg style="position:absolute;left:2.4px;top:-11.7px" width="15" height="15" viewBox="0 0 15 15"><circle cx="7.5" cy="7.5" r="6.8" fill="#333"/><rect x="3.2" y="6.3" width="9.2" height="2.4" rx="1.1" fill="#fff"/></svg><div style="position:absolute;left:23px;top:-16.3px;height:24px;line-height:24px;font-size:14px;letter-spacing:0.65px;white-space:pre;color:#111;">A_tmd.db</div><div style="position:absolute;left:190px;top:-16.3px;height:24px;line-height:24px;font-size:14px;letter-spacing:-0.35px;white-space:pre;color:#111;">TYPE_CEM_SOL</div><div style="position:absolute;left:306.5px;top:-16.3px;height:24px;line-height:24px;font-size:14px;letter-spacing:0.4px;white-space:pre;color:#111;">(45)</div><div style="position:absolute;left:338.5px;top:-16.3px;height:24px;line-height:24px;font-size:16px;letter-spacing:0.25px;white-space:pre;color:#111;">не соответствуют</div><div style="position:absolute;left:478.4px;top:-16.3px;height:24px;line-height:24px;font-size:16px;letter-spacing:-0.15px;white-space:pre;color:#111;">справочнику</div><div style="position:absolute;left:574.7px;top:-16.3px;height:24px;line-height:24px;font-size:14px;letter-spacing:-0.6px;white-space:pre;color:#111;">S_TCR</div><div style="position:absolute;right:23px;top:-16.3px;height:24px;line-height:24px;font-size:15px;letter-spacing:0.7px;white-space:pre;color:#111;">20:4</div><svg style="position:absolute;left:1107px;top:-13px" width="17" height="19" viewBox="0 0 17 19"><rect x="0.75" y="0.75" width="15.5" height="17.5" rx="1.5" fill="#fff" stroke="#333" stroke-width="1.5"/><path d="M3.5 1 V15 M1 15.5 H16" stroke="#333" stroke-width="1.2"/><text x="5" y="11" font-family="Liberation Sans" font-weight="700" font-size="7" fill="#333">Az</text></svg><svg style="position:absolute;left:2.4px;top:12.3px" width="15" height="15" viewBox="0 0 15 15"><circle cx="7.5" cy="7.5" r="6.8" fill="#333"/><rect x="3.2" y="6.3" width="9.2" height="2.4" rx="1.1" fill="#fff"/></svg><div style="position:absolute;left:23px;top:7.7px;height:24px;line-height:24px;font-size:14px;letter-spacing:0.65px;white-space:pre;color:#111;">A_tmd.db</div><div style="position:absolute;left:190px;top:7.7px;height:24px;line-height:24px;font-size:14px;letter-spacing:-0.35px;white-space:pre;color:#111;">TYPE_CEM_SOL</div><div style="position:absolute;left:306.5px;top:7.7px;height:24px;line-height:24px;font-size:14px;letter-spacing:0.4px;white-space:pre;color:#111;">(25)</div><div style="position:absolute;left:338.5px;top:7.7px;height:24px;line-height:24px;font-size:16px;letter-spacing:0.25px;white-space:pre;color:#111;">не соответствуют</div><div style="position:absolute;left:478.4px;top:7.7px;height:24px;line-height:24px;font-size:16px;letter-spacing:-0.15px;white-space:pre;color:#111;">справочнику</div><div style="position:absolute;left:574.7px;top:7.7px;height:24px;line-height:24px;font-size:14px;letter-spacing:-0.6px;white-space:pre;color:#111;">S_TCR</div><div style="position:absolute;right:23px;top:7.7px;height:24px;line-height:24px;font-size:15px;letter-spacing:0.7px;white-space:pre;color:#111;">21:4</div><svg style="position:absolute;left:1107px;top:11px" width="17" height="19" viewBox="0 0 17 19"><rect x="0.75" y="0.75" width="15.5" height="17.5" rx="1.5" fill="#fff" stroke="#333" stroke-width="1.5"/><path d="M3.5 1 V15 M1 15.5 H16" stroke="#333" stroke-width="1.2"/><text x="5" y="11" font-family="Liberation Sans" font-weight="700" font-size="7" fill="#333">Az</text></svg><div style="position:absolute;left:0;top:32px;width:1125px;height:24px;background:#d0d0d0;"></div><svg style="position:absolute;left:2.4px;top:36.3px" width="15" height="15" viewBox="0 0 15 15"><circle cx="7.5" cy="7.5" r="6.8" fill="#333"/><rect x="3.2" y="6.3" width="9.2" height="2.4" rx="1.1" fill="#fff"/></svg><div style="position:absolute;left:23px;top:31.7px;height:24px;line-height:24px;font-size:14px;letter-spacing:0.65px;white-space:pre;color:#111;">A_tmd.db</div><div style="position:absolute;left:190px;top:31.7px;height:24px;line-height:24px;font-size:14px;letter-spacing:-0.35px;white-space:pre;color:#111;">TYPE_CEM_SOL</div><div style="position:absolute;left:306.5px;top:31.7px;height:24px;line-height:24px;font-size:14px;letter-spacing:0.4px;white-space:pre;color:#111;">(45)</div><div style="position:absolute;left:338.5px;top:31.7px;height:24px;line-height:24px;font-size:16px;letter-spacing:0.25px;white-space:pre;color:#111;">не соответствуют</div><div style="position:absolute;left:478.4px;top:31.7px;height:24px;line-height:24px;font-size:16px;letter-spacing:-0.15px;white-space:pre;color:#111;">справочнику</div><div style="position:absolute;left:574.7px;top:31.7px;height:24px;line-height:24px;font-size:14px;letter-spacing:-0.6px;white-space:pre;color:#111;">S_TCR</div><div style="position:absolute;right:23px;top:31.7px;height:24px;line-height:24px;font-size:15px;letter-spacing:0.7px;white-space:pre;color:#111;">22:4</div><svg style="position:absolute;left:1107px;top:35px" width="17" height="19" viewBox="0 0 17 19"><rect x="0.75" y="0.75" width="15.5" height="17.5" rx="1.5" fill="#fff" stroke="#333" stroke-width="1.5"/><path d="M3.5 1 V15 M1 15.5 H16" stroke="#333" stroke-width="1.2"/><text x="5" y="11" font-family="Liberation Sans" font-weight="700" font-size="7" fill="#333">Az</text></svg><svg style="position:absolute;left:2.4px;top:60.3px" width="15" height="15" viewBox="0 0 15 15"><circle cx="7.5" cy="7.5" r="6.8" fill="#333"/><rect x="3.2" y="6.3" width="9.2" height="2.4" rx="1.1" fill="#fff"/></svg><div style="position:absolute;left:23px;top:55.7px;height:24px;line-height:24px;font-size:14px;letter-spacing:0.65px;white-space:pre;color:#111;">A_tmd.db</div><div style="position:absolute;left:190px;top:55.7px;height:24px;line-height:24px;font-size:14px;letter-spacing:-0.35px;white-space:pre;color:#111;">TYPE_CEM_SOL</div><div style="position:absolute;left:306.5px;top:55.7px;height:24px;line-height:24px;font-size:14px;letter-spacing:0.4px;white-space:pre;color:#111;">(25)</div><div style="position:absolute;left:338.5px;top:55.7px;height:24px;line-height:24px;font-size:16px;letter-spacing:0.25px;white-space:pre;color:#111;">не соответствуют</div><div style="position:absolute;left:478.4px;top:55.7px;height:24px;line-height:24px;font-size:16px;letter-spacing:-0.15px;white-space:pre;color:#111;">справочнику</div><div style="position:absolute;left:574.7px;top:55.7px;height:24px;line-height:24px;font-size:14px;letter-spacing:-0.6px;white-space:pre;color:#111;">S_TCR</div><div style="position:absolute;right:23px;top:55.7px;height:24px;line-height:24px;font-size:15px;letter-spacing:0.7px;white-space:pre;color:#111;">28:4</div><svg style="position:absolute;left:1107px;top:59px" width="17" height="19" viewBox="0 0 17 19"><rect x="0.75" y="0.75" width="15.5" height="17.5" rx="1.5" fill="#fff" stroke="#333" stroke-width="1.5"/><path d="M3.5 1 V15 M1 15.5 H16" stroke="#333" stroke-width="1.2"/><text x="5" y="11" font-family="Liberation Sans" font-weight="700" font-size="7" fill="#333">Az</text></svg><svg style="position:absolute;left:2.4px;top:84.3px" width="15" height="15" viewBox="0 0 15 15"><circle cx="7.5" cy="7.5" r="6.8" fill="#333"/><rect x="3.2" y="6.3" width="9.2" height="2.4" rx="1.1" fill="#fff"/></svg><div style="position:absolute;left:23px;top:79.7px;height:24px;line-height:24px;font-size:14px;letter-spacing:0.65px;white-space:pre;color:#111;">A_tmd.db</div><div style="position:absolute;left:190px;top:79.7px;height:24px;line-height:24px;font-size:14px;letter-spacing:-0.35px;white-space:pre;color:#111;">TYPE_CEM_SOL</div><div style="position:absolute;left:306.5px;top:79.7px;height:24px;line-height:24px;font-size:14px;letter-spacing:0.4px;white-space:pre;color:#111;">(45)</div><div style="position:absolute;left:338.5px;top:79.7px;height:24px;line-height:24px;font-size:16px;letter-spacing:0.25px;white-space:pre;color:#111;">не соответствуют</div><div style="position:absolute;left:478.4px;top:79.7px;height:24px;line-height:24px;font-size:16px;letter-spacing:-0.15px;white-space:pre;color:#111;">справочнику</div><div style="position:absolute;left:574.7px;top:79.7px;height:24px;line-height:24px;font-size:14px;letter-spacing:-0.6px;white-space:pre;color:#111;">S_TCR</div><div style="position:absolute;right:23px;top:79.7px;height:24px;line-height:24px;font-size:15px;letter-spacing:0.7px;white-space:pre;color:#111;">29:4</div><svg style="position:absolute;left:1107px;top:83px" width="17" height="19" viewBox="0 0 17 19"><rect x="0.75" y="0.75" width="15.5" height="17.5" rx="1.5" fill="#fff" stroke="#333" stroke-width="1.5"/><path d="M3.5 1 V15 M1 15.5 H16" stroke="#333" stroke-width="1.2"/><text x="5" y="11" font-family="Liberation Sans" font-weight="700" font-size="7" fill="#333">Az</text></svg><svg style="position:absolute;left:2.4px;top:108.3px" width="15" height="15" viewBox="0 0 15 15"><circle cx="7.5" cy="7.5" r="6.8" fill="#333"/><rect x="3.2" y="6.3" width="9.2" height="2.4" rx="1.1" fill="#fff"/></svg><div style="position:absolute;left:23px;top:103.7px;height:24px;line-height:24px;font-size:14px;letter-spacing:0.65px;white-space:pre;color:#111;">A_tmd.db</div><div style="position:absolute;left:190px;top:103.7px;height:24px;line-height:24px;font-size:14px;letter-spacing:-0.35px;white-space:pre;color:#111;">TYPE_CEM_SOL</div><div style="position:absolute;left:306.5px;top:103.7px;height:24px;line-height:24px;font-size:14px;letter-spacing:0.4px;white-space:pre;color:#111;">(25)</div><div style="position:absolute;left:338.5px;top:103.7px;height:24px;line-height:24px;font-size:16px;letter-spacing:0.25px;white-space:pre;color:#111;">не соответствуют</div><div style="position:absolute;left:478.4px;top:103.7px;height:24px;line-height:24px;font-size:16px;letter-spacing:-0.15px;white-space:pre;color:#111;">справочнику</div><div style="position:absolute;left:574.7px;top:103.7px;height:24px;line-height:24px;font-size:14px;letter-spacing:-0.6px;white-space:pre;color:#111;">S_TCR</div><div style="position:absolute;right:23px;top:103.7px;height:24px;line-height:24px;font-size:15px;letter-spacing:0.7px;white-space:pre;color:#111;">30:4</div><svg style="position:absolute;left:1107px;top:107px" width="17" height="19" viewBox="0 0 17 19"><rect x="0.75" y="0.75" width="15.5" height="17.5" rx="1.5" fill="#fff" stroke="#333" stroke-width="1.5"/><path d="M3.5 1 V15 M1 15.5 H16" stroke="#333" stroke-width="1.2"/><text x="5" y="11" font-family="Liberation Sans" font-weight="700" font-size="7" fill="#333">Az</text></svg><svg style="position:absolute;left:2.4px;top:132.3px" width="15" height="15" viewBox="0 0 15 15"><circle cx="7.5" cy="7.5" r="6.8" fill="#333"/><rect x="3.2" y="6.3" width="9.2" height="2.4" rx="1.1" fill="#fff"/></svg><div style="position:absolute;left:23px;top:127.7px;height:24px;line-height:24px;font-size:14px;letter-spacing:0.65px;white-space:pre;color:#111;">A_tmd.db</div><div style="position:absolute;left:190px;top:127.7px;height:24px;line-height:24px;font-size:14px;letter-spacing:-0.35px;white-space:pre;color:#111;">TYPE_CEM_SOL</div><div style="position:absolute;left:306.5px;top:127.7px;height:24px;line-height:24px;font-size:14px;letter-spacing:0.4px;white-space:pre;color:#111;">(45)</div><div style="position:absolute;left:338.5px;top:127.7px;height:24px;line-height:24px;font-size:16px;letter-spacing:0.25px;white-space:pre;color:#111;">не соответствуют</div><div style="position:absolute;left:478.4px;top:127.7px;height:24px;line-height:24px;font-size:16px;letter-spacing:-0.15px;white-space:pre;color:#111;">справочнику</div><div style="position:absolute;left:574.7px;top:127.7px;height:24px;line-height:24px;font-size:14px;letter-spacing:-0.6px;white-space:pre;color:#111;">S_TCR</div><div style="position:absolute;right:23px;top:127.7px;height:24px;line-height:24px;font-size:15px;letter-spacing:0.7px;white-space:pre;color:#111;">31:4</div><svg style="position:absolute;left:1107px;top:131px" width="17" height="19" viewBox="0 0 17 19"><rect x="0.75" y="0.75" width="15.5" height="17.5" rx="1.5" fill="#fff" stroke="#333" stroke-width="1.5"/><path d="M3.5 1 V15 M1 15.5 H16" stroke="#333" stroke-width="1.2"/><text x="5" y="11" font-family="Liberation Sans" font-weight="700" font-size="7" fill="#333">Az</text></svg>
</div>
<div style="position:absolute;left:6px;top:702px;width:1125px;height:25px;background:#fff;border-bottom:1px solid #e0e0e0;"></div>
<div style="position:absolute;left:25px;top:702px;width:1px;height:24px;background:#e3e3e3;"></div>
<div style="position:absolute;left:192px;top:702px;width:1px;height:24px;background:#e3e3e3;"></div>
<div style="position:absolute;left:-191px;width:600px;text-align:center;top:705.30px;line-height:18px;font-size:15px;color:#111;font-weight:400;letter-spacing:0.2px;white-space:pre;">Данные</div>
<div style="position:absolute;right:764px;top:705.30px;line-height:18px;font-size:15px;color:#111;font-weight:400;letter-spacing:0.15px;white-space:pre;text-align:right;">Ошибка</div>
<div style="position:absolute;left:1131px;top:702px;width:11px;height:175px;background:#f0f0f0;"></div>
<div style="position:absolute;left:1133px;top:788px;width:6px;height:64px;background:#d6d6d6;border-radius:3px;"></div>
<div style="position:absolute;left:5px;top:877px;width:1137px;height:1px;background:#c8c8c8;"></div>
<div style="position:absolute;left:5px;top:702px;width:1px;height:175px;background:#c4c4c4;"></div>
<div style="position:absolute;left:1147px;top:101px;width:235px;height:789px;border:1px solid #c2c2c2;border-top:none;"></div>
<div style="position:absolute;left:1147px;top:101px;width:235px;height:28px;background:#d3d3d3;"></div>
<div style="position:absolute;left:1147px;top:101px;width:127px;height:29px;background:#f2f2f2;border:1px solid #c8c8c8;border-bottom:none;"></div>
<div style="position:absolute;left:1154px;top:108.34px;line-height:14px;font-size:12px;color:#000;font-weight:400;letter-spacing:0.5px;white-space:pre;">Каталог файлов</div>
<svg style="position:absolute;left:1258px;top:112px" width="8" height="8" viewBox="0 0 8 8"><path d="M0.5 0.5 L7.5 7.5 M7.5 0.5 L0.5 7.5" stroke="#666" stroke-width="1.2"/></svg>
<div style="position:absolute;left:1364px;top:118px;width:11px;height:1px;background:#444;"></div>
<div style="position:absolute;left:1274px;top:129px;width:108px;height:1px;background:#c8c8c8;"></div>
<div style="position:absolute;left:1150px;top:131px;width:228px;height:687px;background:#fff;border:1px solid #c8c8c8;overflow:hidden;">
<svg style="position:absolute;left:4px;top:4px" width="14" height="11"><path d="M0 0 H5 L7 2 H14 V11 H0 Z" fill="#9aa3ab"/></svg><div style="position:absolute;left:23px;top:0px;height:19px;line-height:22px;font-size:14px;letter-spacing:0.15px;white-space:pre;color:#111;">base140126</div><svg style="position:absolute;left:4px;top:26.5px" width="10" height="7"><path d="M0.8 0.8 L4.6 4.9 L8.4 0.8" fill="none" stroke="#b0b0b0" stroke-width="1.6"/></svg><svg style="position:absolute;left:22px;top:23px" width="14" height="11"><path d="M0 0 H5 L7 2 H14 V11 H0 Z" fill="#9aa3ab"/></svg><div style="position:absolute;left:41px;top:19px;height:19px;line-height:22px;font-size:14px;letter-spacing:0.15px;white-space:pre;color:#111;">BASA</div><svg style="position:absolute;left:42px;top:41px" width="10" height="14"><path d="M5 0 H10 V14 H0 V5 H5 Z" fill="#9aa3ab"/><path d="M0 4 L4 0 V4 Z" fill="#9aa3ab"/></svg><div style="position:absolute;left:59px;top:38px;height:19px;line-height:22px;font-size:14px;letter-spacing:0.15px;white-space:pre;color:#111;">A_chgp.PX</div><svg style="position:absolute;left:42px;top:60px" width="10" height="14"><path d="M5 0 H10 V14 H0 V5 H5 Z" fill="#9aa3ab"/><path d="M0 4 L4 0 V4 Z" fill="#9aa3ab"/></svg><div style="position:absolute;left:59px;top:57px;height:19px;line-height:22px;font-size:14px;letter-spacing:0.15px;white-space:pre;color:#111;">A_chgp.VAL</div><div style="position:absolute;left:0;top:77px;width:215px;height:19px;background:#d4d4d4;"></div><svg style="position:absolute;left:42px;top:79px" width="10" height="14"><path d="M5 0 H10 V14 H0 V5 H5 Z" fill="#9aa3ab"/><path d="M0 4 L4 0 V4 Z" fill="#9aa3ab"/></svg><div style="position:absolute;left:59px;top:76px;height:19px;line-height:22px;font-size:14px;letter-spacing:0.15px;white-space:pre;color:#111;">A_chgp.db</div><svg style="position:absolute;left:42px;top:98px" width="10" height="14"><path d="M5 0 H10 V14 H0 V5 H5 Z" fill="#9aa3ab"/><path d="M0 4 L4 0 V4 Z" fill="#9aa3ab"/></svg><div style="position:absolute;left:59px;top:95px;height:19px;line-height:22px;font-size:14px;letter-spacing:0.15px;white-space:pre;color:#111;">A_chgp1.PX</div><svg style="position:absolute;left:42px;top:117px" width="10" height="14"><path d="M5 0 H10 V14 H0 V5 H5 Z" fill="#9aa3ab"/><path d="M0 4 L4 0 V4 Z" fill="#9aa3ab"/></svg><div style="position:absolute;left:59px;top:114px;height:19px;line-height:22px;font-size:14px;letter-spacing:0.15px;white-space:pre;color:#111;">A_chgp1.XG0</div><svg style="position:absolute;left:42px;top:136px" width="10" height="14"><path d="M5 0 H10 V14 H0 V5 H5 Z" fill="#9aa3ab"/><path d="M0 4 L4 0 V4 Z" fill="#9aa3ab"/></svg><div style="position:absolute;left:59px;top:133px;height:19px;line-height:22px;font-size:14px;letter-spacing:0.15px;white-space:pre;color:#111;">A_chgp1.YG0</div><svg style="position:absolute;left:42px;top:155px" width="10" height="14"><path d="M5 0 H10 V14 H0 V5 H5 Z" fill="#9aa3ab"/><path d="M0 4 L4 0 V4 Z" fill="#9aa3ab"/></svg><div style="position:absolute;left:59px;top:152px;height:19px;line-height:22px;font-size:14px;letter-spacing:0.15px;white-space:pre;color:#111;">A_chgp1.db</div><svg style="position:absolute;left:42px;top:174px" width="10" height="14"><path d="M5 0 H10 V14 H0 V5 H5 Z" fill="#9aa3ab"/><path d="M0 4 L4 0 V4 Z" fill="#9aa3ab"/></svg><div style="position:absolute;left:59px;top:171px;height:19px;line-height:22px;font-size:14px;letter-spacing:0.15px;white-space:pre;color:#111;">A_fnek.PX</div><svg style="position:absolute;left:42px;top:193px" width="10" height="14"><path d="M5 0 H10 V14 H0 V5 H5 Z" fill="#9aa3ab"/><path d="M0 4 L4 0 V4 Z" fill="#9aa3ab"/></svg><div style="position:absolute;left:59px;top:190px;height:19px;line-height:22px;font-size:14px;letter-spacing:0.15px;white-space:pre;color:#111;">A_fnek.VAL</div><svg style="position:absolute;left:42px;top:212px" width="10" height="14"><path d="M5 0 H10 V14 H0 V5 H5 Z" fill="#9aa3ab"/><path d="M0 4 L4 0 V4 Z" fill="#9aa3ab"/></svg><div style="position:absolute;left:59px;top:209px;height:19px;line-height:22px;font-size:14px;letter-spacing:0.15px;white-space:pre;color:#111;">A_fnek.db</div><svg style="position:absolute;left:42px;top:231px" width="10" height="14"><path d="M5 0 H10 V14 H0 V5 H5 Z" fill="#9aa3ab"/><path d="M0 4 L4 0 V4 Z" fill="#9aa3ab"/></svg><div style="position:absolute;left:59px;top:228px;height:19px;line-height:22px;font-size:14px;letter-spacing:0.15px;white-space:pre;color:#111;">A_fnek.FAM</div><svg style="position:absolute;left:42px;top:250px" width="10" height="14"><path d="M5 0 H10 V14 H0 V5 H5 Z" fill="#9aa3ab"/><path d="M0 4 L4 0 V4 Z" fill="#9aa3ab"/></svg><div style="position:absolute;left:59px;top:247px;height:19px;line-height:22px;font-size:14px;letter-spacing:0.15px;white-space:pre;color:#111;">A_fnek.PX</div><svg style="position:absolute;left:42px;top:269px" width="10" height="14"><path d="M5 0 H10 V14 H0 V5 H5 Z" fill="#9aa3ab"/><path d="M0 4 L4 0 V4 Z" fill="#9aa3ab"/></svg><div style="position:absolute;left:59px;top:266px;height:19px;line-height:22px;font-size:14px;letter-spacing:0.15px;white-space:pre;color:#111;">A_fnek.TV</div><svg style="position:absolute;left:42px;top:288px" width="10" height="14"><path d="M5 0 H10 V14 H0 V5 H5 Z" fill="#9aa3ab"/><path d="M0 4 L4 0 V4 Z" fill="#9aa3ab"/></svg><div style="position:absolute;left:59px;top:285px;height:19px;line-height:22px;font-size:14px;letter-spacing:0.15px;white-space:pre;color:#111;">A_fnek.VAL</div><svg style="position:absolute;left:42px;top:307px" width="10" height="14"><path d="M5 0 H10 V14 H0 V5 H5 Z" fill="#9aa3ab"/><path d="M0 4 L4 0 V4 Z" fill="#9aa3ab"/></svg><div style="position:absolute;left:59px;top:304px;height:19px;line-height:22px;font-size:14px;letter-spacing:0.15px;white-space:pre;color:#111;">A_fnek.db</div><svg style="position:absolute;left:42px;top:326px" width="10" height="14"><path d="M5 0 H10 V14 H0 V5 H5 Z" fill="#9aa3ab"/><path d="M0 4 L4 0 V4 Z" fill="#9aa3ab"/></svg><div style="position:absolute;left:59px;top:323px;height:19px;line-height:22px;font-size:14px;letter-spacing:0.15px;white-space:pre;color:#111;">A_mog.PX</div><svg style="position:absolute;left:42px;top:345px" width="10" height="14"><path d="M5 0 H10 V14 H0 V5 H5 Z" fill="#9aa3ab"/><path d="M0 4 L4 0 V4 Z" fill="#9aa3ab"/></svg><div style="position:absolute;left:59px;top:342px;height:19px;line-height:22px;font-size:14px;letter-spacing:0.15px;white-space:pre;color:#111;">A_mog.VAL</div><svg style="position:absolute;left:42px;top:364px" width="10" height="14"><path d="M5 0 H10 V14 H0 V5 H5 Z" fill="#9aa3ab"/><path d="M0 4 L4 0 V4 Z" fill="#9aa3ab"/></svg><div style="position:absolute;left:59px;top:361px;height:19px;line-height:22px;font-size:14px;letter-spacing:0.15px;white-space:pre;color:#111;">A_mog.db</div><svg style="position:absolute;left:42px;top:383px" width="10" height="14"><path d="M5 0 H10 V14 H0 V5 H5 Z" fill="#9aa3ab"/><path d="M0 4 L4 0 V4 Z" fill="#9aa3ab"/></svg><div style="position:absolute;left:59px;top:380px;height:19px;line-height:22px;font-size:14px;letter-spacing:0.15px;white-space:pre;color:#111;">A_mr.PX</div><svg style="position:absolute;left:42px;top:402px" width="10" height="14"><path d="M5 0 H10 V14 H0 V5 H5 Z" fill="#9aa3ab"/><path d="M0 4 L4 0 V4 Z" fill="#9aa3ab"/></svg><div style="position:absolute;left:59px;top:399px;height:19px;line-height:22px;font-size:14px;letter-spacing:0.15px;white-space:pre;color:#111;">A_mr.VAL</div><svg style="position:absolute;left:42px;top:421px" width="10" height="14"><path d="M5 0 H10 V14 H0 V5 H5 Z" fill="#9aa3ab"/><path d="M0 4 L4 0 V4 Z" fill="#9aa3ab"/></svg><div style="position:absolute;left:59px;top:418px;height:19px;line-height:22px;font-size:14px;letter-spacing:0.15px;white-space:pre;color:#111;">A_mr.db</div><svg style="position:absolute;left:42px;top:440px" width="10" height="14"><path d="M5 0 H10 V14 H0 V5 H5 Z" fill="#9aa3ab"/><path d="M0 4 L4 0 V4 Z" fill="#9aa3ab"/></svg><div style="position:absolute;left:59px;top:437px;height:19px;line-height:22px;font-size:14px;letter-spacing:0.15px;white-space:pre;color:#111;">A_mrfa.PX</div><svg style="position:absolute;left:42px;top:459px" width="10" height="14"><path d="M5 0 H10 V14 H0 V5 H5 Z" fill="#9aa3ab"/><path d="M0 4 L4 0 V4 Z" fill="#9aa3ab"/></svg><div style="position:absolute;left:59px;top:456px;height:19px;line-height:22px;font-size:14px;letter-spacing:0.15px;white-space:pre;color:#111;">A_mrfa.VAL</div><svg style="position:absolute;left:42px;top:478px" width="10" height="14"><path d="M5 0 H10 V14 H0 V5 H5 Z" fill="#9aa3ab"/><path d="M0 4 L4 0 V4 Z" fill="#9aa3ab"/></svg><div style="position:absolute;left:59px;top:475px;height:19px;line-height:22px;font-size:14px;letter-spacing:0.15px;white-space:pre;color:#111;">A_mrfa.db</div><svg style="position:absolute;left:42px;top:497px" width="10" height="14"><path d="M5 0 H10 V14 H0 V5 H5 Z" fill="#9aa3ab"/><path d="M0 4 L4 0 V4 Z" fill="#9aa3ab"/></svg><div style="position:absolute;left:59px;top:494px;height:19px;line-height:22px;font-size:14px;letter-spacing:0.15px;white-space:pre;color:#111;">A_mroi.PX</div><svg style="position:absolute;left:42px;top:516px" width="10" height="14"><path d="M5 0 H10 V14 H0 V5 H5 Z" fill="#9aa3ab"/><path d="M0 4 L4 0 V4 Z" fill="#9aa3ab"/></svg><div style="position:absolute;left:59px;top:513px;height:19px;line-height:22px;font-size:14px;letter-spacing:0.15px;white-space:pre;color:#111;">A_mroi.VAL</div><svg style="position:absolute;left:42px;top:535px" width="10" height="14"><path d="M5 0 H10 V14 H0 V5 H5 Z" fill="#9aa3ab"/><path d="M0 4 L4 0 V4 Z" fill="#9aa3ab"/></svg><div style="position:absolute;left:59px;top:532px;height:19px;line-height:22px;font-size:14px;letter-spacing:0.15px;white-space:pre;color:#111;">A_mroi.db</div><svg style="position:absolute;left:42px;top:554px" width="10" height="14"><path d="M5 0 H10 V14 H0 V5 H5 Z" fill="#9aa3ab"/><path d="M0 4 L4 0 V4 Z" fill="#9aa3ab"/></svg><div style="position:absolute;left:59px;top:551px;height:19px;line-height:22px;font-size:14px;letter-spacing:0.15px;white-space:pre;color:#111;">A_mr.PX</div><svg style="position:absolute;left:42px;top:573px" width="10" height="14"><path d="M5 0 H10 V14 H0 V5 H5 Z" fill="#9aa3ab"/><path d="M0 4 L4 0 V4 Z" fill="#9aa3ab"/></svg><div style="position:absolute;left:59px;top:570px;height:19px;line-height:22px;font-size:14px;letter-spacing:0.15px;white-space:pre;color:#111;">A_mr.VAL</div><svg style="position:absolute;left:42px;top:592px" width="10" height="14"><path d="M5 0 H10 V14 H0 V5 H5 Z" fill="#9aa3ab"/><path d="M0 4 L4 0 V4 Z" fill="#9aa3ab"/></svg><div style="position:absolute;left:59px;top:589px;height:19px;line-height:22px;font-size:14px;letter-spacing:0.15px;white-space:pre;color:#111;">A_mr.db</div><svg style="position:absolute;left:42px;top:611px" width="10" height="14"><path d="M5 0 H10 V14 H0 V5 H5 Z" fill="#9aa3ab"/><path d="M0 4 L4 0 V4 Z" fill="#9aa3ab"/></svg><div style="position:absolute;left:59px;top:608px;height:19px;line-height:22px;font-size:14px;letter-spacing:0.15px;white-space:pre;color:#111;">A_ob.PX</div><svg style="position:absolute;left:42px;top:630px" width="10" height="14"><path d="M5 0 H10 V14 H0 V5 H5 Z" fill="#9aa3ab"/><path d="M0 4 L4 0 V4 Z" fill="#9aa3ab"/></svg><div style="position:absolute;left:59px;top:627px;height:19px;line-height:22px;font-size:14px;letter-spacing:0.15px;white-space:pre;color:#111;">A_ob.VAL</div><svg style="position:absolute;left:42px;top:649px" width="10" height="14"><path d="M5 0 H10 V14 H0 V5 H5 Z" fill="#9aa3ab"/><path d="M0 4 L4 0 V4 Z" fill="#9aa3ab"/></svg><div style="position:absolute;left:59px;top:646px;height:19px;line-height:22px;font-size:14px;letter-spacing:0.15px;white-space:pre;color:#111;">A_ob.db</div><svg style="position:absolute;left:42px;top:668px" width="10" height="14"><path d="M5 0 H10 V14 H0 V5 H5 Z" fill="#9aa3ab"/><path d="M0 4 L4 0 V4 Z" fill="#9aa3ab"/></svg><div style="position:absolute;left:59px;top:665px;height:19px;line-height:22px;font-size:14px;letter-spacing:0.15px;white-space:pre;color:#111;">A_omp.PX</div>
</div>
<div style="position:absolute;left:1367px;top:132px;width:10px;height:685px;background:#f4f4f4;"></div>
<div style="position:absolute;left:1369px;top:134px;width:6px;height:75px;background:#d8d8d8;border-radius:3px;"></div>
<div style="position:absolute;left:1150px;top:827.84px;line-height:14px;font-size:12px;color:#000;font-weight:400;letter-spacing:0.35px;white-space:pre;">314 файлов</div>
<svg style="position:absolute;left:1225px;top:824px" width="22" height="22" viewBox="0 0 22 22"><circle cx="11" cy="11" r="9.7" fill="none" stroke="#2b2b2b" stroke-width="2.2"/><rect x="9.8" y="8.6" width="2.6" height="8" fill="#2b2b2b"/><circle cx="11.1" cy="5.6" r="1.5" fill="#2b2b2b"/></svg>
<div style="position:absolute;left:1155px;top:861.84px;line-height:14px;font-size:12px;color:#000;font-weight:400;letter-spacing:0.3px;white-space:pre;">Поиск</div>
<div style="position:absolute;left:1200px;top:859px;width:174px;height:20px;background:#fff;border:1px solid #c8c8c8;"></div>
<svg style="position:absolute;left:1351px;top:897px" width="24" height="24" viewBox="0 0 24 24"><path d="M4.5 11.2 L7 20 L20.5 3.8" fill="none" stroke="#333" stroke-width="5.2" stroke-linecap="round" stroke-linejoin="round"/></svg>
<div style="position:absolute;left:1386px;top:0px;width:1px;height:928px;background:#5c5c5c;"></div>
<div style="position:absolute;left:1387px;top:0px;width:1px;height:928px;background:#2c4a2a;"></div>
<div style="position:absolute;left:0px;top:927px;width:1386px;height:1px;background:#6a6a6a;"></div>
<div style="position:absolute;left:0px;top:926px;width:1386px;height:1px;background:#fafafa;"></div>
<div style="position:absolute;left:1381px;top:0px;width:7px;height:4px;background:#2c4a2a;"></div>
<div style="position:absolute;left:0px;top:0px;width:3px;height:2px;background:#22331a;"></div>
<div style="position:absolute;left:0px;top:2px;width:1px;height:2px;background:#555;"></div>
<div style="position:absolute;left:645px;top:347px;width:600px;height:400px;background:#f2f2f2;border:1px solid #646464;border-radius:6px 6px 0 0;box-shadow:2px 4px 14px 4px rgba(0,0,0,0.38);"></div>
<div style="position:absolute;left:646px;top:348px;width:598px;height:28px;background:linear-gradient(#e9e9e9,#d8d8d8);border-radius:5px 5px 0 0;"></div>
<div style="position:absolute;left:657px;top:357px;width:8px;height:8px;border-radius:50%;background:#f4f4f4;border:1px solid #cfcfcf;"></div>
<div style="position:absolute;left:619px;width:600px;text-align:center;top:354.50px;line-height:16px;font-size:13px;color:#3a3a3a;font-weight:700;letter-spacing:1.15px;white-space:pre;">S_TCR ( Тип раствора )</div>
<svg style="position:absolute;left:1166px;top:352px" width="18" height="18" viewBox="0 0 18 18"><circle cx="9" cy="9" r="8" fill="#e2e2e2" stroke="#b4b4b4" stroke-width="1"/><path d="M5.8 7.6 L9 10.8 L12.2 7.6" fill="none" stroke="#555" stroke-width="1.4"/></svg>
<svg style="position:absolute;left:1192px;top:352px" width="18" height="18" viewBox="0 0 18 18"><circle cx="9" cy="9" r="8" fill="#e2e2e2" stroke="#b4b4b4" stroke-width="1"/><path d="M5.8 10.4 L9 7.2 L12.2 10.4" fill="none" stroke="#555" stroke-width="1.4"/></svg>
<svg style="position:absolute;left:1218px;top:352px" width="18" height="18" viewBox="0 0 18 18"><circle cx="9" cy="9" r="8" fill="#e2e2e2" stroke="#b4b4b4" stroke-width="1"/><path d="M6 6 L12 12 M12 6 L6 12" fill="none" stroke="#555" stroke-width="1.4"/></svg>
<div style="position:absolute;left:729px;top:392.02px;line-height:14px;font-size:11.5px;color:#000;font-weight:400;letter-spacing:0.65px;white-space:pre;">Поиск по значению:</div>
<div style="position:absolute;left:857px;top:386px;width:100px;height:26px;background:#fff;border:1px solid #7ea6d4;box-shadow:inset 0 0 0 1px #c5d9ef;"></div>
<div style="position:absolute;left:968px;top:392.02px;line-height:14px;font-size:11.5px;color:#000;font-weight:400;letter-spacing:1.0px;white-space:pre;">Фильтр:</div>
<div style="position:absolute;left:1027px;top:386px;width:93px;height:26px;background:#fff;border:1px solid #c4c4c4;border-radius:3px;"></div>
<div style="position:absolute;left:1034px;top:392.34px;line-height:14px;font-size:12px;color:#000;font-weight:400;letter-spacing:0.3px;white-space:pre;">КОД</div>
<svg style="position:absolute;left:1103px;top:395px" width="11" height="7" viewBox="0 0 11 7"><path d="M1 1 L5.5 5.5 L10 1" fill="none" stroke="#555" stroke-width="1.1"/></svg>
<div style="position:absolute;left:1135px;top:386px;width:26px;height:26px;background:#fff;border:1px solid #c4c4c4;border-radius:3px;"></div>
<svg style="position:absolute;left:1138px;top:389px" width="20" height="20" viewBox="0 0 20 20"><circle cx="7.8" cy="7.8" r="5.6" fill="none" stroke="#222" stroke-width="2.4"/><path d="M11.8 11.8 L17.5 17.5" stroke="#222" stroke-width="3" stroke-linecap="round"/></svg>
<div style="position:absolute;left:661px;top:417px;width:568px;height:314px;background:#fff;border:1px solid #c8c8c8;"></div>
<div style="position:absolute;left:662px;top:418px;width:566px;height:25px;background:#f2f2f2;border-bottom:1px solid #dedede;"></div>
<div style="position:absolute;left:944px;top:418px;width:1px;height:25px;background:#dcdcdc;"></div>
<div style="position:absolute;left:491px;width:600px;text-align:center;top:423.02px;line-height:14px;font-size:11.5px;color:#000;font-weight:400;letter-spacing:0.5px;white-space:pre;">КОД</div>
<div style="position:absolute;left:774px;width:600px;text-align:center;top:423.02px;line-height:14px;font-size:11.5px;color:#000;font-weight:400;letter-spacing:0.3px;white-space:pre;">НАЗВАНИЕ</div>
<div style="position:absolute;left:917px;top:420px;width:25px;height:21px;background:#fff;border:2px solid #9a9a9a;"></div>
<svg style="position:absolute;left:925px;top:428px" width="9" height="5" viewBox="0 0 9 5"><path d="M0 0 H9 L4.5 5 Z" fill="#444"/></svg>
<div style="position:absolute;left:1200px;top:420px;width:25px;height:21px;background:#fff;border:2px solid #9a9a9a;"></div>
<svg style="position:absolute;left:1208px;top:428px" width="9" height="5" viewBox="0 0 9 5"><path d="M0 0 H9 L4.5 5 Z" fill="#444"/></svg>
<div style="position:absolute;left:666px;top:446.02px;line-height:14px;font-size:11.5px;color:#000;font-weight:400;letter-spacing:0.4px;white-space:pre;">00</div>
<div style="position:absolute;left:948px;top:446.02px;line-height:14px;font-size:11.5px;color:#000;font-weight:400;letter-spacing:0.75px;white-space:pre;">Нет данных</div>
<div style="position:absolute;left:666px;top:466.02px;line-height:14px;font-size:11.5px;color:#000;font-weight:400;letter-spacing:0.4px;white-space:pre;">01</div>
<div style="position:absolute;left:948px;top:466.02px;line-height:14px;font-size:11.5px;color:#000;font-weight:400;letter-spacing:0.75px;white-space:pre;">Цемент</div>
<div style="position:absolute;left:666px;top:486.02px;line-height:14px;font-size:11.5px;color:#000;font-weight:400;letter-spacing:0.4px;white-space:pre;">02</div>
<div style="position:absolute;left:948px;top:486.02px;line-height:14px;font-size:11.5px;color:#000;font-weight:400;letter-spacing:0.75px;white-space:pre;">Гель-цемент</div>
<div style="position:absolute;left:666px;top:506.02px;line-height:14px;font-size:11.5px;color:#000;font-weight:400;letter-spacing:0.4px;white-space:pre;">04</div>
<div style="position:absolute;left:948px;top:506.02px;line-height:14px;font-size:11.5px;color:#000;font-weight:400;letter-spacing:0.75px;white-space:pre;">Тампонажный облегченный</div>
<div style="position:absolute;left:666px;top:526.02px;line-height:14px;font-size:11.5px;color:#000;font-weight:400;letter-spacing:0.4px;white-space:pre;">05</div>
<div style="position:absolute;left:948px;top:526.02px;line-height:14px;font-size:11.5px;color:#000;font-weight:400;letter-spacing:0.75px;white-space:pre;">Цемент расширяющийся</div>
</body></html>
